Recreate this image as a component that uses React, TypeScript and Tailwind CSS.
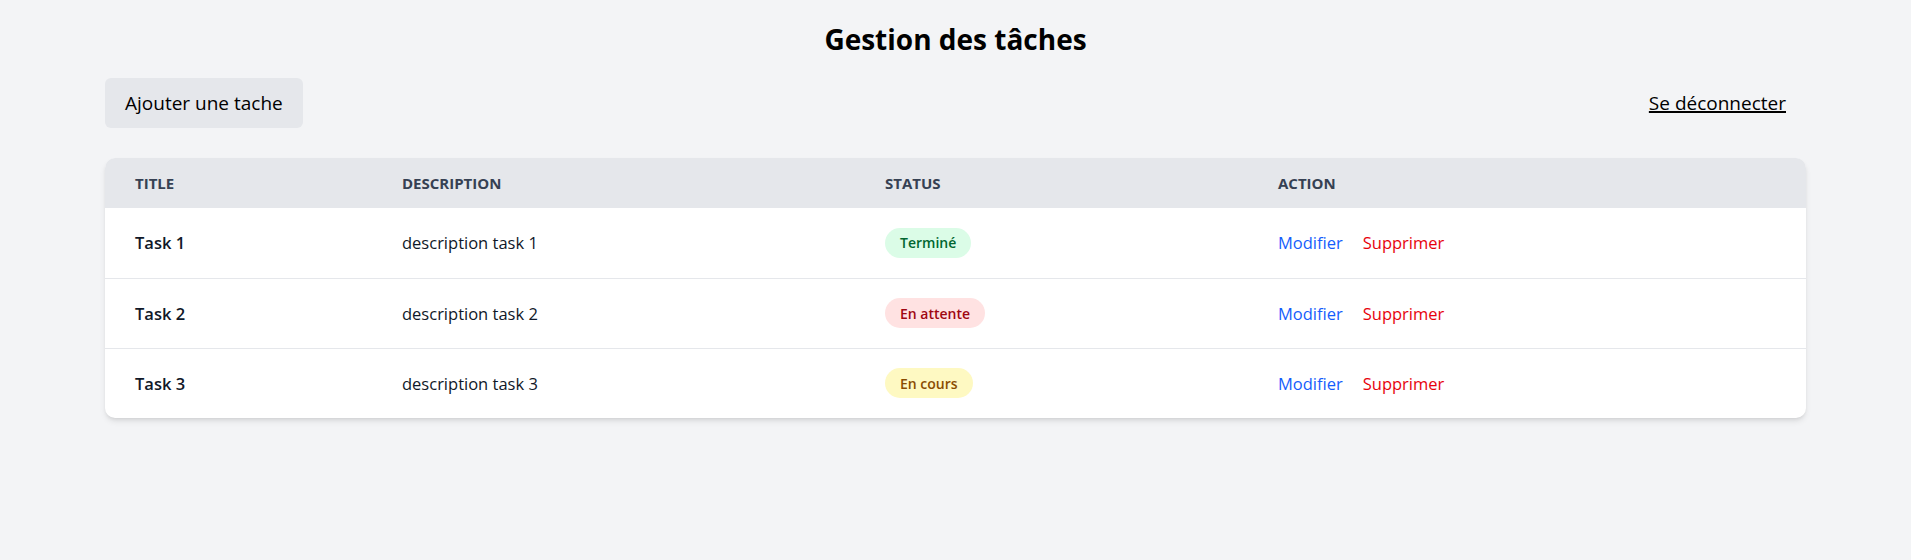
type Task = {
  title: string;
  description: string;
  status: 'done' | 'pending' | 'progress';
};

const tasks: Task[] = [
  { title: 'Task 1', description: 'description task 1', status: 'done' },
  { title: 'Task 2', description: 'description task 2', status: 'pending' },
  { title: 'Task 3', description: 'description task 3', status: 'progress' },
];

function StatusBadge({ status }: { status: Task['status'] }) {
  if (status === 'done') {
    return (
      <span className="inline-flex h-[30px] items-center rounded-full bg-green-100 px-[15px] text-[14px] font-semibold text-green-800">
        Terminé
      </span>
    );
  }
  if (status === 'pending') {
    return (
      <span className="inline-flex h-[30px] items-center rounded-full bg-red-100 px-[15px] text-[14px] font-semibold text-red-800">
        En attente
      </span>
    );
  }
  return (
    <span className="inline-flex h-[30px] items-center rounded-full bg-yellow-100 px-[15px] text-[14px] font-semibold text-yellow-800">
      En cours
    </span>
  );
}

export default function App() {
  return (
    <div className="min-h-screen bg-gray-100 px-[105px] pt-[19px] font-['Open_Sans',sans-serif] text-black">
      <h1 className="mb-[19px] text-center text-[28px] leading-[40px] font-bold">Gestion des tâches</h1>

      <div className="mb-[30px] flex items-center justify-between">
        <button className="h-[50px] rounded-[6px] bg-gray-200 px-[20px] text-[19px] leading-[30px]">
          Ajouter une tache
        </button>
        <a href="#" className="mr-[20px] text-[19px] leading-[30px] underline decoration-[2px]">
          Se déconnecter
        </a>
      </div>

      <div className="overflow-hidden rounded-[10px] bg-white shadow-md">
        <table className="w-full table-fixed border-collapse text-left">
          <colgroup>
            <col className="w-[267px]" />
            <col className="w-[483px]" />
            <col className="w-[393px]" />
            <col />
          </colgroup>
          <thead className="bg-gray-200">
            <tr>
              <th className="h-[50px] px-[30px] text-[15px] font-bold uppercase text-gray-700">Title</th>
              <th className="h-[50px] px-[30px] text-[15px] font-bold uppercase text-gray-700">Description</th>
              <th className="h-[50px] px-[30px] text-[15px] font-bold uppercase text-gray-700">Status</th>
              <th className="h-[50px] px-[30px] text-[15px] font-bold uppercase text-gray-700">Action</th>
            </tr>
          </thead>
          <tbody>
            {tasks.map((task, i) => (
              <tr key={task.title} className={i < tasks.length - 1 ? 'border-b border-gray-200' : ''}>
                <td className="h-[70px] px-[30px] pt-[2px] text-[16.5px] font-semibold text-gray-900">{task.title}</td>
                <td className="h-[70px] px-[30px] pt-[2px] text-[16.5px] text-gray-900">{task.description}</td>
                <td className="h-[70px] px-[30px]">
                  <StatusBadge status={task.status} />
                </td>
                <td className="h-[70px] px-[30px] pt-[2px] text-[16.5px]">
                  <button className="mr-[20px] text-blue-600">Modifier</button>
                  <button className="text-red-600">Supprimer</button>
                </td>
              </tr>
            ))}
          </tbody>
        </table>
      </div>
    </div>
  );
}
